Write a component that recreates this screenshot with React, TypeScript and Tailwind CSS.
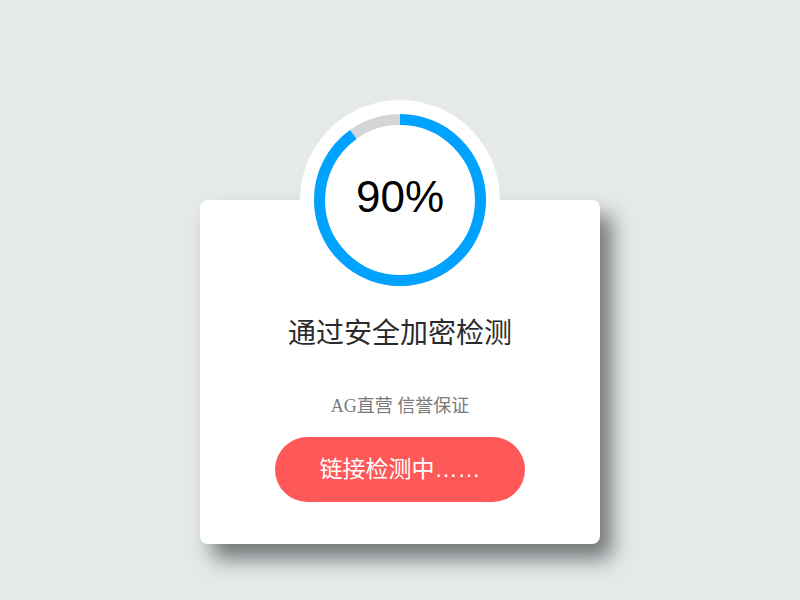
import type { CSSProperties } from 'react'

const cjk = '"Noto Sans CJK SC", sans-serif'

function Ring({ percent }: { percent: number }) {
  const r = 80.5
  const c = 2 * Math.PI * r
  const ring: CSSProperties = { strokeDasharray: `${(c * percent) / 100} ${c}` }
  return (
    <svg width="200" height="200" viewBox="0 0 200 200" className="absolute inset-0">
      <circle cx="100" cy="100" r={r} fill="none" stroke="#d4d5d7" strokeWidth="11" />
      <circle
        cx="100"
        cy="100"
        r={r}
        fill="none"
        stroke="#00a2ff"
        strokeWidth="11"
        style={ring}
        transform="rotate(-90 100 100)"
      />
    </svg>
  )
}

export default function App() {
  return (
    <div className="flex min-h-screen w-full justify-center bg-[#e5e9ea] pt-[200px]">
      <div className="relative flex h-[344px] w-[400px] flex-col items-center rounded-lg bg-white shadow-[12px_15px_20px_rgba(90,92,94,0.8)]">
        <div className="absolute left-[100px] top-[-100px] h-[200px] w-[200px] rounded-full bg-white">
          <Ring percent={90} />
          <div className="absolute inset-0 flex items-center justify-center pb-[6px] font-['Liberation_Sans',Arial,sans-serif] text-[44px] text-black">
            90%
          </div>
        </div>

        <h1
          className="mt-[111px] text-[28px] leading-[40px] text-[#2b2b2b]"
          style={{ fontFamily: cjk }}
        >
          通过安全加密检测
        </h1>

        <p className="mt-[43px] font-['Liberation_Serif','Noto_Sans_CJK_SC',serif] text-[18px] leading-[24px] text-[#7a7a7a]">
          AG直营 信誉保证
        </p>

        <button className="mt-[19px] flex h-[65px] w-[250px] items-center justify-center rounded-full bg-[#ff5858] font-['Liberation_Sans','Noto_Sans_CJK_SC',sans-serif] text-[23px] text-white">
          链接检测中……
        </button>
      </div>
    </div>
  )
}
